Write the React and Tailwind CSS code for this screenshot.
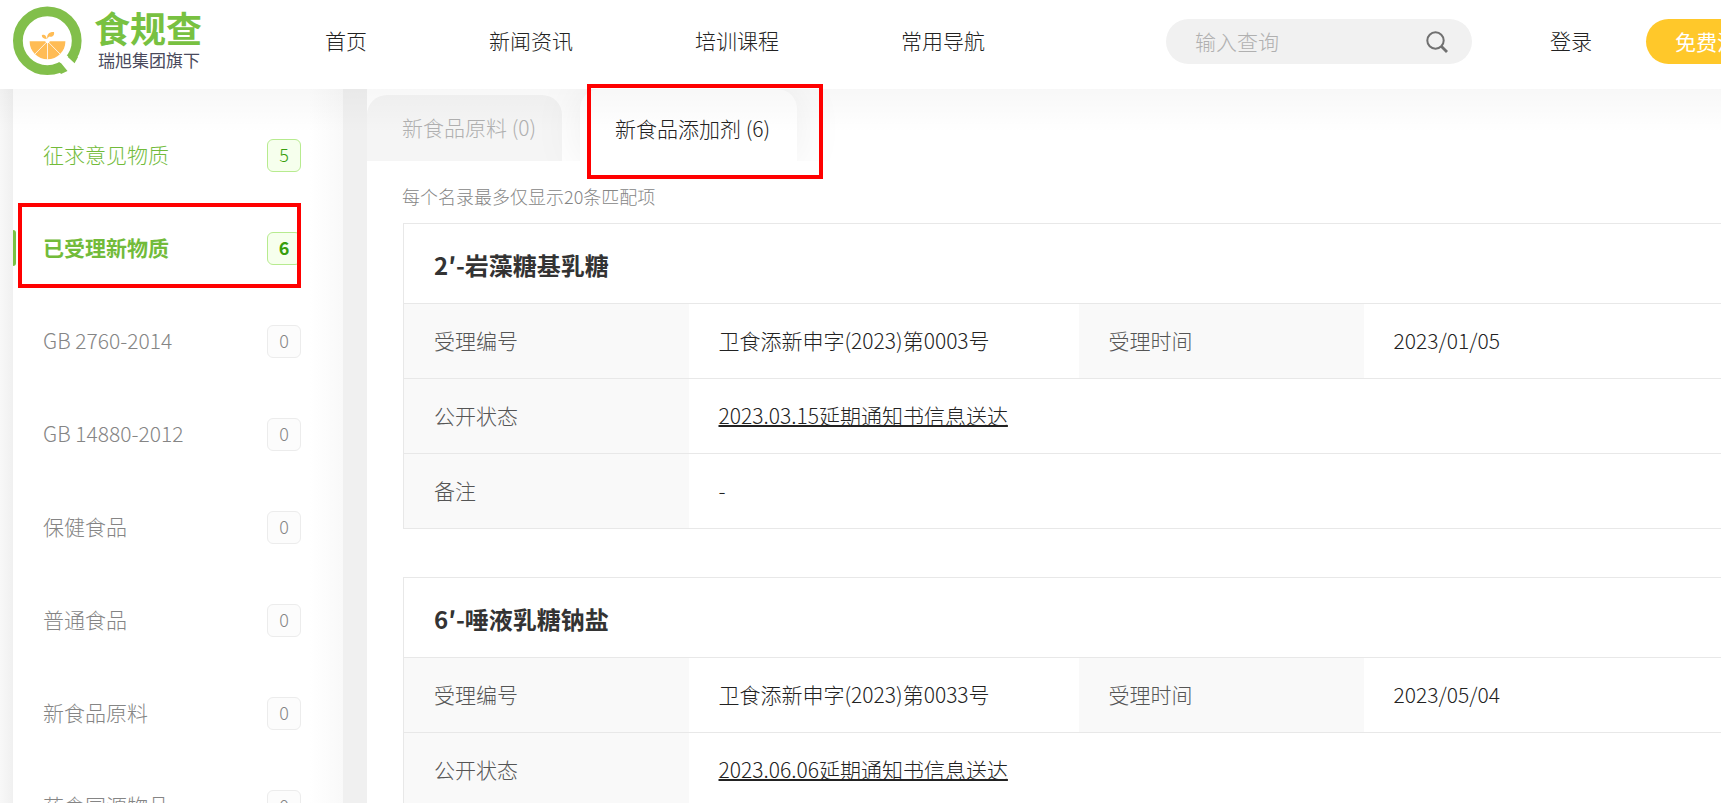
import React from "react";

const NAV = ["首页", "新闻资讯", "培训课程", "常用导航"];

const CATEGORIES = [
  { name: "征求意见物质", count: 5 },
  { name: "已受理新物质", count: 6, active: true },
  { name: "GB 2760-2014", count: 0 },
  { name: "GB 14880-2012", count: 0 },
  { name: "保健食品", count: 0 },
  { name: "普通食品", count: 0 },
  { name: "新食品原料", count: 0 },
  { name: "药食同源物品", count: 0 },
];

const RECORDS = [
  { title: "2′-岩藻糖基乳糖", no: "卫食添新申字(2023)第0003号", date: "2023/01/05", status: "2023.03.15延期通知书信息送达", note: "-" },
  { title: "6′-唾液乳糖钠盐", no: "卫食添新申字(2023)第0033号", date: "2023/05/04", status: "2023.06.06延期通知书信息送达", note: "-" },
];

function Logo() {
  return (
    <a href="#" className="flex shrink-0 items-center">
      <svg width="72" height="72" viewBox="0 0 72 72" aria-hidden="true">
        <circle cx="35.3" cy="35.7" r="29.4" fill="none" stroke="#82bf4b" strokeWidth="9.8" />
        <path d="M46.500 56 L56 67.500 L70 70 L64.500 59 L54.500 50 Z" fill="#fff" />
        <path d="M42 60.500 L48.700 57.800 L55.500 66 L49 69 Z" fill="#82bf4b" />
        <path d="M55.800 52 L60 47 L66 52 L62.600 58.300 Z" fill="#82bf4b" />
        <path d="M17.600 36.300 H53.400 A17.900 18 0 0 1 17.600 36.300 Z" fill="#ffbc55" />
        <path d="M35.500 36.300 V54.500 M35.500 36.300 L22.500 49.500 M35.500 36.300 L48.500 49.500" stroke="#fff" strokeWidth="0.8" />
        <circle cx="35.500" cy="36.300" r="2" fill="#fff" />
        <path d="M35.500 34 C34.300 29.500 37 26.800 42 27 C42.800 31 39.800 32.300 37.500 31.500 C36.300 32 35.800 33 35.500 34 Z" fill="#ffbc55" />
        <path d="M34.800 34 C34 29.800 32 29.200 29.800 30.200 C29.800 32.800 31.800 33.800 34.800 34 Z" fill="#ffbc55" />
      </svg>
      <span className="ml-[10px] flex flex-col">
        <span className="text-[36px] leading-[38px] font-bold text-[#78c141]">食规查</span>
        <span className="ml-1 text-[17px] leading-7 font-normal text-[#4a4a5c]">瑞旭集团旗下</span>
      </span>
    </a>
  );
}

function Header() {
  return (
    <header className="relative z-10 flex h-[89px] items-start bg-white pl-3 text-[21px] text-[#222]">
      <div className="flex w-[313px] shrink-0 pt-[5px]">
        <Logo />
      </div>
      <nav className="flex h-[82px] shrink-0 items-center gap-[122px]">
        {NAV.map((n) => (
          <a key={n} href="#">{n}</a>
        ))}
      </nav>
      <form className="mt-[19px] ml-[181px] flex h-[45px] w-[306px] shrink-0 items-center rounded-[23px] bg-[#f1f1f1] pr-6 pl-[29px]">
        <input aria-label="输入查询" placeholder="输入查询" className="min-w-0 flex-1 bg-transparent font-light outline-none placeholder:text-[#b0b0b0]" />
        <button type="button" aria-label="搜索">
          <svg width="22" height="22" viewBox="0 0 22 22" fill="none" stroke="#707070" strokeWidth="2">
            <circle cx="9.500" cy="9.500" r="8.200" />
            <path d="M15.500 15.500 L21 21" strokeWidth="2.800" />
          </svg>
        </button>
      </form>
      <a href="#" className="ml-[78px] flex h-[82px] shrink-0 items-center">登录</a>
      <button type="button" className="mt-[19px] ml-[54px] h-[45px] shrink-0 rounded-[23px] bg-[#ffc82a] px-[29px] font-normal text-white">免费注册</button>
      <span className="pointer-events-none absolute inset-x-0 top-full h-11 bg-linear-to-b from-black/3 to-transparent" />
    </header>
  );
}

function Category({ name, count, active }) {
  const on = count > 0;
  return (
    <li className={`relative flex h-[93px] items-center ${active ? "font-bold" : ""}`}>
      {active && <span className="absolute top-7 left-0 h-9 w-[3px] rounded-r bg-[#7ac143]" />}
      <a href="#" className={`flex flex-1 items-center justify-between pr-[42px] pl-[30px] ${on ? "text-[#72bb3a]" : "text-[#858585]"}`}>
        <span className="pb-0.5">{name}</span>
        <span className={`flex h-[33px] w-[34px] items-center justify-center rounded-md border pb-0.5 text-[18px] ${on ? "border-[#b7eb8f] bg-[#f6ffed] text-[#389e0d]" : "border-[#ececec] bg-[#fcfcfc] text-[#858585]"}`}>{count}</span>
      </a>
      {active && <span className="pointer-events-none absolute top-px right-[42px] left-[5px] h-[85px] border-4 border-[#ff0000]" />}
    </li>
  );
}

function Sidebar() {
  return (
    <aside className="ml-[13px] w-[330px] shrink-0 bg-linear-to-r from-white from-90% to-[#f9f9f9] pt-5 text-[21px]">
      <ul>
        {CATEGORIES.map((c) => (
          <Category key={c.name} {...c} />
        ))}
      </ul>
    </aside>
  );
}

function Record({ title, no, date, status, note }) {
  const label = "bg-[#f9f9f9] pl-[30px] text-left font-light text-[#555]";
  const value = "pl-[30px]";
  return (
    <table className="mb-12 w-full table-fixed border-collapse border-y border-l border-[#e8e8e8]">
      <colgroup>
        <col className="w-[285px]" />
        <col className="w-[390px]" />
        <col className="w-[285px]" />
        <col />
      </colgroup>
      <tbody>
        <tr className="h-20 border-b border-[#e8e8e8]">
          <th colSpan={4} className="pt-0.5 pl-[30px] text-left text-[24px] font-bold text-[#333]">{title}</th>
        </tr>
        <tr className="h-[75px] border-b border-[#e8e8e8]">
          <th className={label}>受理编号</th>
          <td className={value}>{no}</td>
          <th className={label}>受理时间</th>
          <td className={value}>{date}</td>
        </tr>
        <tr className="h-[75px] border-b border-[#e8e8e8]">
          <th className={label}>公开状态</th>
          <td colSpan={3} className={value}><a href="#" className="underline decoration-2">{status}</a></td>
        </tr>
        <tr className="h-[75px]">
          <th className={label}>备注</th>
          <td colSpan={3} className={value}>{note}</td>
        </tr>
      </tbody>
    </table>
  );
}

export default function App() {
  return (
    <div className="flex h-screen flex-col overflow-hidden bg-[#f0f0f0] font-['Noto_Sans_CJK_SC',sans-serif] font-light">
      <Header />
      <div className="flex min-h-0 flex-1 bg-linear-to-r from-[#f8f8f8] to-[#f0f0f0] to-[13px]">
        <Sidebar />
        <main className="ml-6 min-w-0 flex-1 bg-white text-[21px] text-[#222]">
          <div className="flex h-[72px] items-end gap-[18px] overflow-hidden">
            <button type="button" className="h-[66px] rounded-t-[20px] bg-[#f5f5f5] pr-[26px] pl-[35px] text-[#b0b0b0]">新食品原料 (0)</button>
            <button type="button" className="h-[72px] rounded-t-[20px] bg-white pt-2 pr-[27px] pl-[35px] shadow-[0_0_50px_rgba(0,0,0,0.08)]">新食品添加剂 (6)</button>
          </div>
          <p className="pt-5 pl-[35px] text-[18px] leading-[30px] text-[#858585]">每个名录最多仅显示20条匹配项</p>
          <div className="pt-3 pl-9">
            {RECORDS.map((r) => (
              <Record key={r.title} {...r} />
            ))}
          </div>
        </main>
      </div>
      <span className="pointer-events-none absolute top-[84px] left-[587px] z-20 h-[95px] w-[236px] border-4 border-[#ff0000]" />
    </div>
  );
}
